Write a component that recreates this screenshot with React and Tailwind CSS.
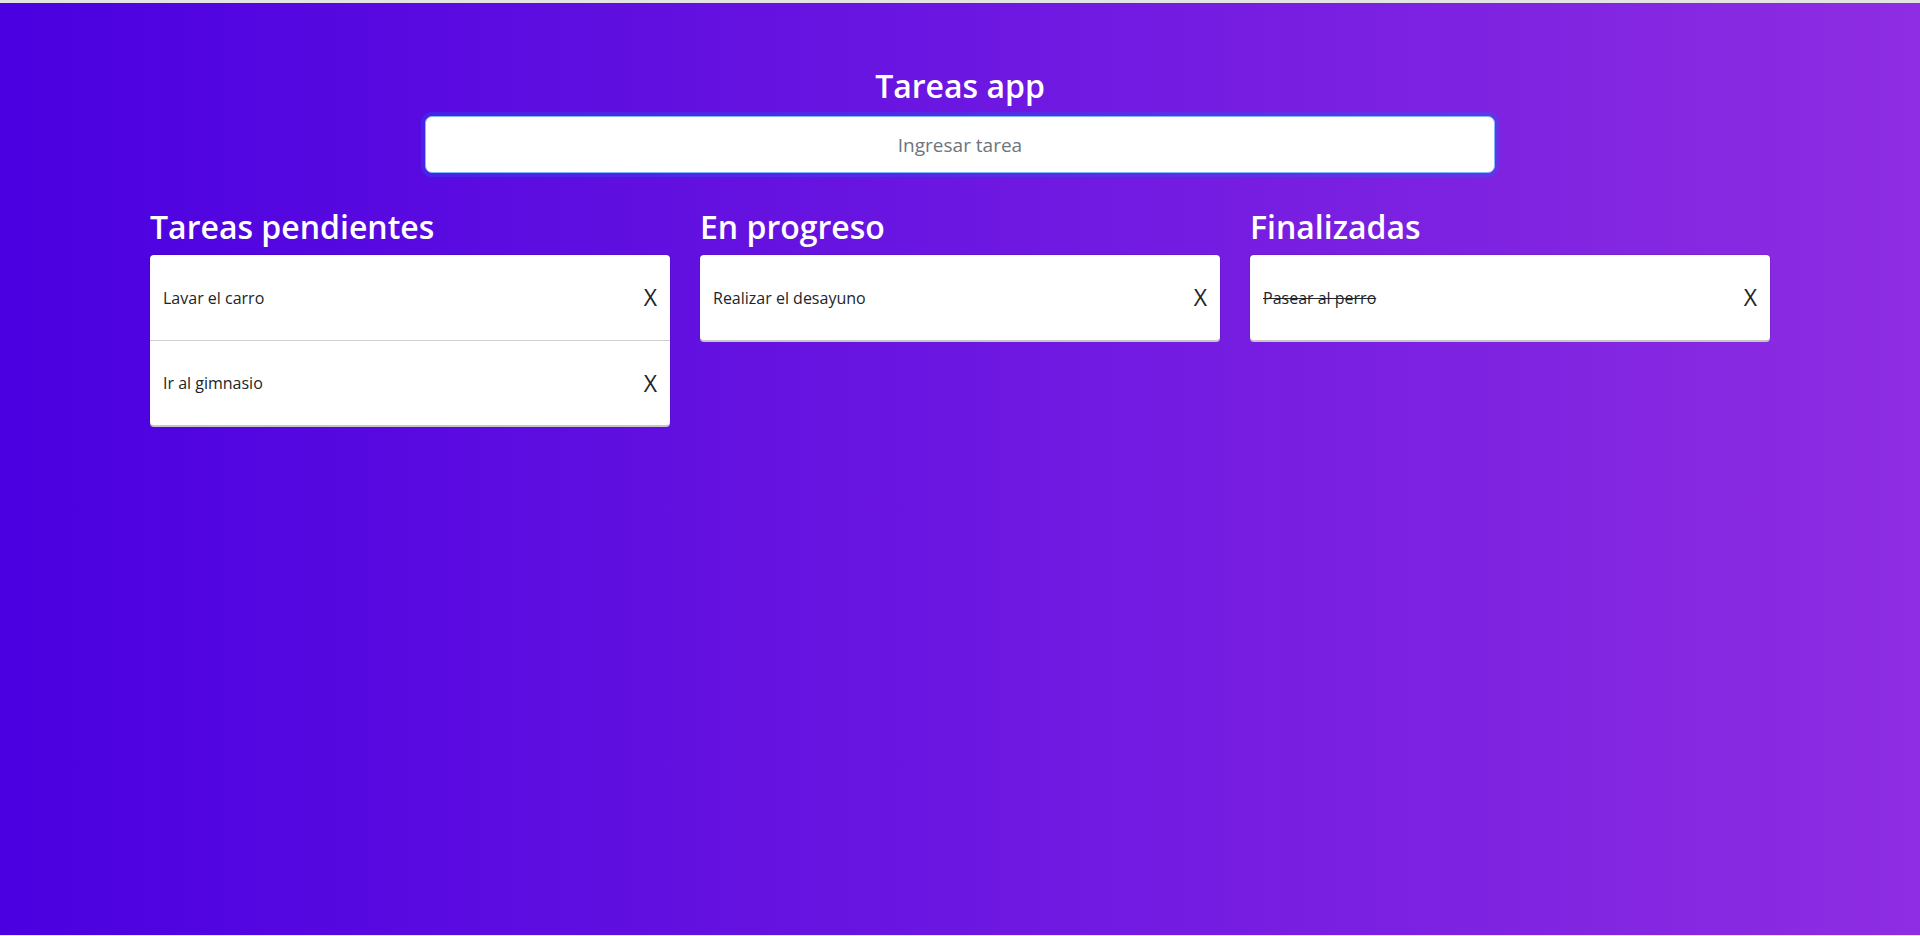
import React from "react";

const columns = [
  { title: "Tareas pendientes", items: ["Lavar el carro", "Ir al gimnasio"], done: false },
  { title: "En progreso", items: ["Realizar el desayuno"], done: false },
  { title: "Finalizadas", items: ["Pasear al perro"], done: true },
];

export default function App() {
  return (
    <div
      className="min-h-screen bg-[#e4e4e4] pt-[3px] pb-[1px]"
      style={{ fontFamily: '"Open Sans", "Noto Sans", sans-serif' }}
    >
      <div className="h-[932px] bg-[linear-gradient(to_right,#4a00e0,#8e2de2)]">
        <div className="pt-[63px] flex flex-col items-center">
          <h1 className="text-[32px] leading-[40px] font-semibold text-white m-0">Tareas app</h1>
          <div className="mt-[10px] w-[1070px] rounded-[7px] shadow-[0_0_0_4px_rgba(13,110,253,0.25)]">
            <input
              type="text"
              placeholder="Ingresar tarea"
              className="w-full h-[57px] rounded-[7px] border border-[#86b7fe] bg-white text-center text-[19px] text-[#212529] placeholder:text-[#6c757d] outline-none"
            />
          </div>
        </div>
        <div className="mx-auto w-[1620px] mt-[35px] grid grid-cols-3 gap-[30px]">
          {columns.map((col) => (
            <div key={col.title}>
              <h2 className="text-[32px] leading-[38px] font-semibold text-white m-0 mb-[9px]">
                {col.title}
              </h2>
              <div className="bg-white rounded-[4px] shadow-[0_2px_0_#c6c6c6,0_0_0_1px_rgba(0,0,0,0.08)] overflow-hidden">
                {col.items.map((it, i) => (
                  <div
                    key={it}
                    className={`flex items-center justify-between h-[85px] px-[13px] ${
                      i > 0 ? "border-t border-[#cfcfcf]" : ""
                    }`}
                  >
                    <span
                      className={`text-[16px] text-[#212529] ${col.done ? "line-through" : ""}`}
                    >
                      {it}
                    </span>
                    <span className="text-[23px] font-medium text-[#212529] leading-none">X</span>
                  </div>
                ))}
              </div>
            </div>
          ))}
        </div>
      </div>
    </div>
  );
}
